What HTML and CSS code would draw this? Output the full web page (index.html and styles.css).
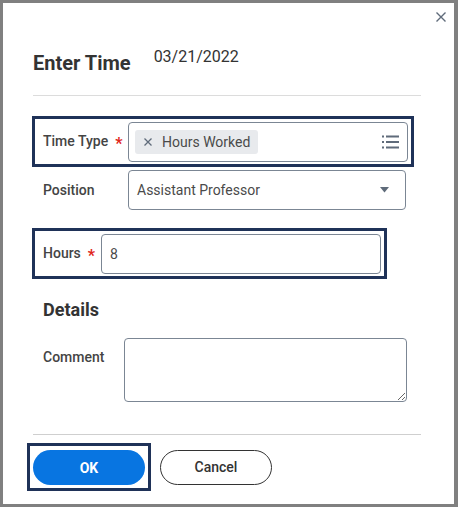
FILE: index.html
```html
<!DOCTYPE html>
<html lang="en">
<head>
<meta charset="utf-8">
<title>Enter Time</title>
<link rel="stylesheet" href="styles.css">
</head>
<body>
<div class="dialog">
  <div class="close-bar">
    <svg class="close" width="10" height="10" viewBox="0 0 10 10"><path d="M0.5 0.5 L9.5 9.5 M9.5 0.5 L0.5 9.5" stroke="#5f6b7a" stroke-width="1.4" fill="none"/></svg>
  </div>
  <div class="header">
    <h1 class="title">Enter Time</h1>
    <span class="date">03/21/2022</span>
  </div>
  <div class="divider"></div>

  <div class="focus ring-type">
    <label class="label lbl-type">Time Type<span class="req">*</span></label>
    <div class="field multi">
      <span class="chip">
        <svg width="8" height="8" viewBox="0 0 8 8"><path d="M0.5 0.5 L7.5 7.5 M7.5 0.5 L0.5 7.5" stroke="#5f6b7a" stroke-width="1.3" fill="none"/></svg>
        Hours Worked
      </span>
      <svg class="list" width="17" height="14" viewBox="0 0 17 14"><g fill="#5f6b7a"><rect x="0" y="0.5" width="2" height="2"/><rect x="4" y="0.5" width="13" height="2"/><rect x="0" y="6" width="2" height="2"/><rect x="4" y="6" width="13" height="2"/><rect x="0" y="11.5" width="2" height="2"/><rect x="4" y="11.5" width="13" height="2"/></g></svg>
    </div>
  </div>

  <div class="row row-pos">
    <label class="label lbl-type">Position</label>
    <div class="field select">
      <span>Assistant Professor</span>
      <svg width="9" height="6" viewBox="0 0 9 6"><path d="M0 0 H9 L4.5 5.5 Z" fill="#5f6b7a"/></svg>
    </div>
  </div>

  <div class="focus ring-hours">
    <label class="label lbl-hours">Hours<span class="req">*</span></label>
    <div class="field text">8</div>
  </div>

  <h2 class="section">Details</h2>

  <div class="row row-comment">
    <label class="label lbl-comment">Comment</label>
    <textarea class="comment"></textarea>
  </div>

  <div class="divider divider-bottom"></div>

  <div class="footer">
    <div class="focus ring-ok">
      <button class="btn btn-ok">OK</button>
    </div>
    <button class="btn btn-cancel">Cancel</button>
  </div>
</div>
</body>
</html>
```

FILE: styles.css
```css
* { box-sizing: border-box; }
html, body { margin: 0; padding: 0; background: #ffffff; }
body { font-family: Roboto, "Liberation Sans", sans-serif; color: #333333; }

.dialog {
  width: 458px;
  height: 507px;
  border-style: solid;
  border-color: #808080;
  border-width: 3px 4px 3px 3px;
  background: #ffffff;
  padding: 0 33px 0 30px;
}

.close-bar {
  display: flex;
  justify-content: flex-end;
  margin-right: -25px;
  padding-top: 9px;
}
.close { display: block; }

.header {
  display: flex;
  align-items: flex-start;
  margin-top: 23px;
}
.title {
  margin: 6px 0 0 0;
  font-size: 20px;
  line-height: 24px;
  font-weight: 700;
  color: #333333;
}
.date {
  margin-left: 23px;
  font-size: 16px;
  line-height: 24px;
  color: #333333;
}

.divider {
  height: 1px;
  background: #dcdcdc;
  margin-top: 20px;
}

.focus {
  border: 3px solid #1f3258;
  display: flex;
  align-items: center;
}
.ring-type {
  margin-top: 20px;
  margin-left: -1px;
  width: 382px;
  padding: 3px 3px 2px 8px;
}
.ring-hours {
  margin-top: 18px;
  margin-left: -1px;
  width: 355px;
  padding: 3px 3px 2px 8px;
}

.label {
  font-size: 14px;
  line-height: 20px;
  font-weight: 500;
  color: #444444;
  flex: none;
}
.lbl-type { width: 85px; }
.lbl-hours { width: 58px; }
.lbl-comment { width: 81px; margin-top: 9px; }

.req {
  color: #e0251b;
  font-weight: 700;
  font-size: 16px;
  margin-left: 7px;
  vertical-align: -3px;
}

.field {
  width: 280px;
  height: 40px;
  border: 1px solid #7b8694;
  border-radius: 4px;
  display: flex;
  align-items: center;
  font-size: 14px;
  color: #4a4a4a;
}
.multi {
  justify-content: space-between;
  padding: 0 8px 0 6px;
}
.chip {
  height: 24px;
  background: #e8eaed;
  border-radius: 3px;
  display: flex;
  align-items: center;
  gap: 10px;
  padding: 0 8px 0 9px;
  font-size: 14px;
  color: #4a4a4a;
}
.chip svg { display: block; }
.list { display: block; }

.row {
  display: flex;
  padding-left: 10px;
}
.row-pos {
  margin-top: 3px;
  align-items: center;
}
.select {
  width: 278px;
  justify-content: space-between;
  padding: 0 16px 0 8px;
}
.select svg { display: block; }

.text { padding-left: 8px; }

.section {
  margin: 19px 0 0 0;
  padding-left: 10px;
  font-size: 18px;
  line-height: 24px;
  font-weight: 700;
  color: #333333;
}

.row-comment {
  margin-top: 16px;
  align-items: flex-start;
}
.comment {
  width: 283px;
  height: 64px;
  border: 1px solid #7b8694;
  border-radius: 4px;
  margin: 0;
  padding: 6px 8px;
  font-family: inherit;
  font-size: 14px;
  outline: none;
}

.divider-bottom {
  margin-top: 32px;
  background: #cfcfcf;
}

.footer {
  display: flex;
  align-items: center;
  gap: 9px;
  margin-top: 8px;
  margin-left: -6px;
}
.ring-ok {
  padding: 4px 3px 3px 3px;
}
.btn {
  width: 112px;
  height: 35px;
  border-radius: 18px;
  font-family: inherit;
  font-size: 14px;
  font-weight: 500;
  padding: 0;
  margin: 0;
  cursor: pointer;
}
.btn-ok {
  background: #0875e1;
  border: none;
  color: #ffffff;
  font-weight: 700;
}
.btn-cancel {
  background: #ffffff;
  border: 1px solid #333333;
  color: #333333;
}
```
